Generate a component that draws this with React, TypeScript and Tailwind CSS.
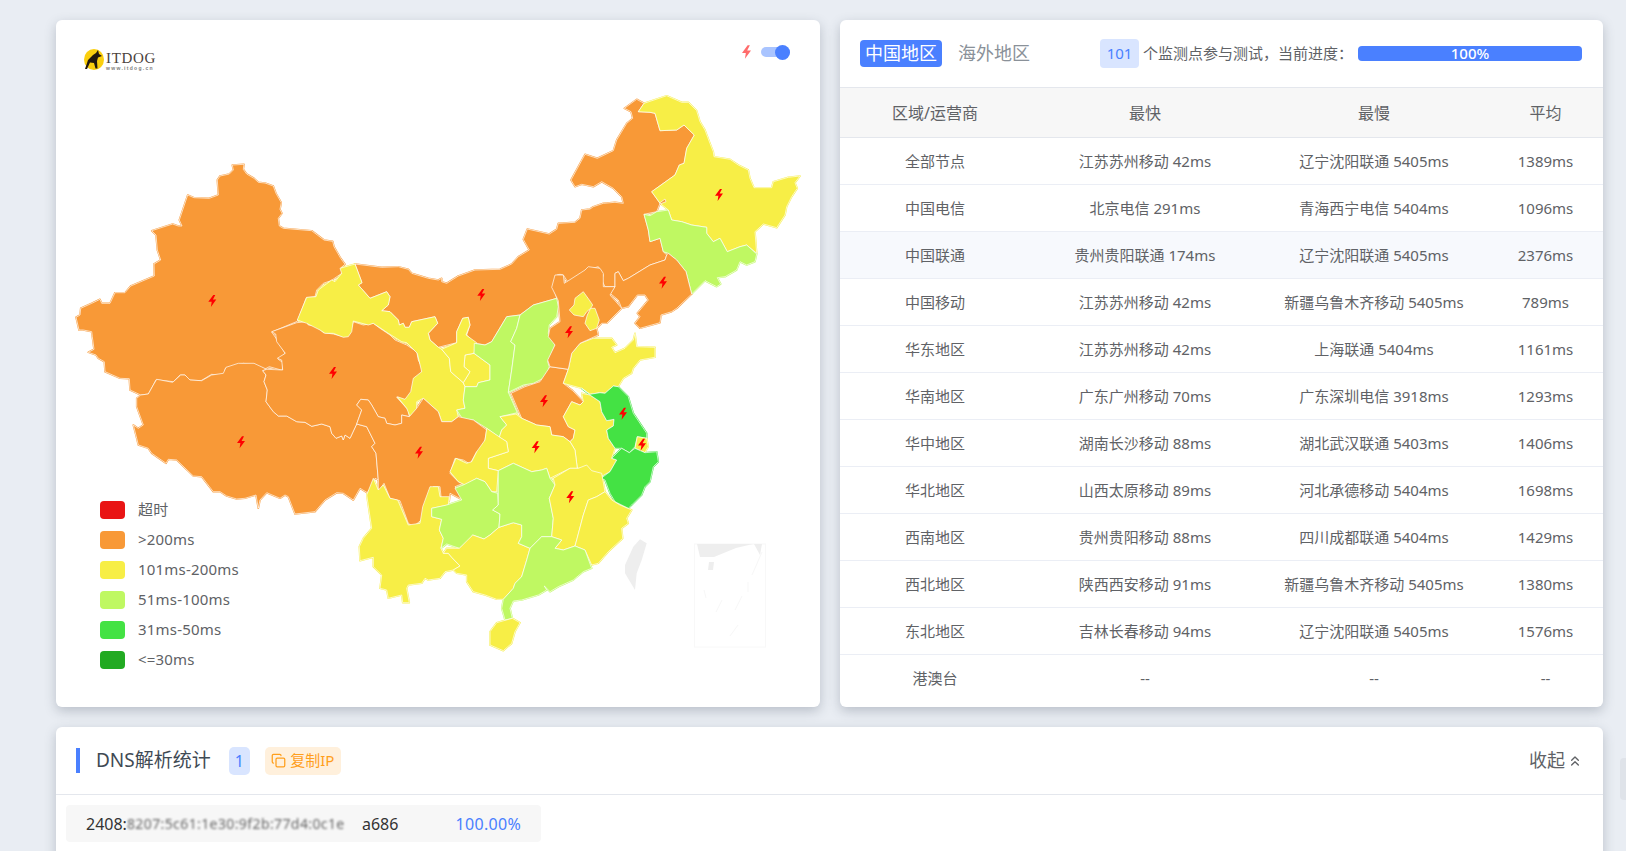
import { ChevronsUp, Copy } from "lucide-react";

// trace origins: each province outline is written in 3x crop coords of one of these page offsets
type Origin = [number, number];
const NW: Origin = [70, 150];
const TB: Origin = [130, 310];
const GS: Origin = [290, 190];
const NE: Origin = [560, 90];
const EA: Origin = [500, 260];
const SO: Origin = [350, 440];

const at = (o: Origin, s: string) =>
  s
    .trim()
    .split(/\s+/)
    .map((p) => {
      const [x, y] = p.split(",").map(Number);
      return `${(o[0] + x / 3).toFixed(1)},${(o[1] + y / 3).toFixed(1)}`;
    })
    .join(" ");

const ORANGE = "#f89937";
const YELLOW = "#f7ee46";
const LIME = "#bff862";
const GREEN = "#44e244";

const provinces: { fill: string; pts: string }[] = [
  // 新疆
  {
    fill: ORANGE,
    pts: [
      at(NW, "487,45 522,43 520,58 530,72 552,85 565,97 585,99 610,108 618,130 634,158 630,178 636,190 625,205 628,228 640,235 725,242 762,270 788,274 792,290 812,325 825,343 813,353 818,368 783,392 760,400 740,420 735,440 709,443 682,514 605,546 620,568 645,610 625,628 639,638 637,661 598,650 585,657 555,645 520,640 466,655 463,672 445,676 425,673 393,692 357,690 345,675 330,675 310,695 258,689"),
      at(TB, "70,225 55,252 32,255 0,240"),
      at(NW, "178,686 150,685 105,665 103,635 85,625 78,615 55,607 72,598 67,560 65,545 40,540 27,540 18,502 30,495 32,475 65,460 90,448 95,460 120,460 135,428 165,428 182,408 253,378 252,342 272,330 262,300 258,255 245,242 308,222 325,228 336,228 328,210 353,135 372,143 418,145 445,135 442,90 450,78 478,72 490,60"),
    ].join(" "),
  },
  // 西藏
  {
    fill: ORANGE,
    pts: at(TB, "80,208 128,217 152,195 165,195 180,210 215,212 245,195 280,190 288,172 325,160 372,160 410,178 398,182 408,195 402,215 412,240 408,275 430,305 445,318 470,318 500,335 525,337 545,349 575,342 600,350 605,370 618,385 635,378 640,390 645,375 660,385 680,342 710,350 735,400 725,410 738,430 745,510 735,505 728,525 712,548 690,535 670,570 640,550 620,548 585,570 555,605 495,612 475,560 465,555 450,565 410,548 390,570 385,595 378,555 345,565 320,567 290,558 270,545 250,545 215,500 190,498 140,450 115,448 108,460 65,430 55,415 25,405 20,385 10,345 25,355 40,345 20,290 20,265 32,255 55,252 70,225"),
  },
  // 青海
  {
    fill: ORANGE,
    pts: at(TB, "425,65 500,38 530,35 535,45 560,48 580,68 610,72 640,80 660,65 670,35 700,45 730,40 750,55 780,75 795,90 830,105 860,125 865,150 878,178 870,200 855,215 845,240 860,260 838,275 800,262 835,300 838,320 815,315 815,340 795,345 770,340 765,325 745,320 725,285 715,270 692,268 680,285 695,300 680,342 660,385 645,375 640,390 635,378 618,385 605,370 600,350 575,342 545,349 525,337 500,335 470,318 445,318 430,305 408,275 412,240 402,215 408,195 398,182 410,178 458,180 455,150 442,145 466,130 440,95 437,72"),
  },
  // 内蒙古
  {
    fill: ORANGE,
    pts: [
      at(GS, "195,222 275,232 325,230 355,238 365,250 415,265 445,270 455,265 455,275 470,280 505,258 555,240 630,238 665,222 685,200 718,180 700,148 712,117 778,132 800,118 805,100 855,97 870,85 875,60 900,57"),
      at(NE, "100,350 130,340 165,337 190,340 185,320 160,295 125,275 100,290 65,283 45,290 33,270 75,193 112,205 160,182 170,150 200,100 218,85 213,65 193,55 230,28 252,40 235,65 270,67 285,70 300,122 350,120 372,105 403,135 380,175 372,220 358,225 345,255 275,305 300,340 290,365 252,373 265,420 270,455 300,445 310,485 320,495 315,510 270,525 205,565 190,572 175,545 165,550 165,590 135,590 125,570 130,555 115,530 80,540 55,565 25,578 10,555 0,553"),
      at(GS, "800,255 790,290 800,325 730,345 690,375 650,380 605,455 585,465 555,460 530,435 540,405 535,382 518,385 500,425 500,458 445,472 420,450 415,430 443,400 435,380 365,395 358,412 345,412 340,400 328,405 325,390 300,365 275,362 295,345 300,320 290,305 240,325 205,285 216,278"),
    ].join(" "),
  },
  // 黑龙江
  {
    fill: YELLOW,
    pts: at(NE, "252,40 320,17 365,37 385,37 410,62 420,95 435,120 450,160 460,185 462,200 510,208 535,225 565,240 570,265 582,293 635,293 640,275 685,262 720,258 705,278 712,295 695,320 680,350 675,375 650,413 610,402 585,425 590,490 560,465 540,470 502,485 480,445 460,455 440,430 440,412 395,405 365,395 335,390 325,360 300,340 275,305 345,255 358,225 372,220 380,175 403,135 372,105 350,120 300,122 285,70 270,67 235,65"),
  },
  { fill: ORANGE, pts: at(NE, "300,338 315,327 318,335 300,342") },
  // 吉林
  {
    fill: LIME,
    pts: at(NE, "252,373 270,377 290,365 325,360 335,390 365,395 395,405 440,412 440,430 460,455 480,445 502,485 540,470 560,465 590,492 585,515 560,525 540,515 530,540 495,560 472,563 482,582 470,590 435,572 395,612 378,545 350,510 325,490 310,485 300,445 270,455 265,420"),
  },
  // 辽宁
  {
    fill: ORANGE,
    pts: at(NE, "165,590 165,550 175,545 190,572 205,565 270,525 315,510 320,495 325,490 350,510 378,545 395,612 350,655 335,665 303,675 300,698 240,715 225,700 240,680 232,670 265,630 255,615 232,615 205,650 185,655 175,630 150,610"),
  },
  // 甘肃
  {
    fill: YELLOW,
    pts: at(GS, "22,390 50,322 78,320 85,300 125,270 135,275 155,250 150,235 195,222 216,278 205,285 240,325 290,305 300,320 295,345 275,362 300,365 325,390 328,405 340,400 345,412 358,412 365,395 435,380 443,400 415,430 420,450 445,472 455,478 478,505 482,545 520,578 525,590 520,630 525,655 500,660 505,680 485,695 455,695 445,665 400,625 380,635 380,660 360,680 350,655 322,620 345,628 362,605 370,565 395,545 382,490 350,458 335,455 295,430 250,400 235,405 190,393 185,425 175,440 160,442 130,430 105,430 90,420 50,400"),
  },
  { fill: YELLOW, pts: at(GS, "552,490 600,525 600,570 565,578 560,590 525,590 520,578 540,545 522,530 525,495") },
  // 宁夏
  {
    fill: YELLOW,
    pts: at(GS, "455,478 500,458 500,425 518,385 535,382 540,405 528,435 560,458 552,490 525,495 522,530 540,545 520,578 482,545 478,505"),
  },
  // 陕西
  {
    fill: LIME,
    pts: at(GS, "690,375 680,415 662,455 675,465 665,540 655,607 682,668 630,680 650,705 635,720 628,742 590,715 550,690 520,690 500,660 525,655 520,630 525,590 560,590 565,578 600,570 600,525 552,490 553,460 585,465 605,455 650,380"),
  },
  // 山西
  {
    fill: LIME,
    pts: at(GS, "800,325 805,350 800,380 778,405 775,430 795,465 773,515 778,530 770,560 730,580 700,585 655,607 665,540 675,465 662,455 680,415 690,375 730,345"),
  },
  // 四川
  {
    fill: ORANGE,
    pts: at(TB, "680,342 695,300 680,285 692,268 715,270 725,285 745,320 765,325 770,340 795,345 815,340 815,315 838,320 860,295 880,265 925,305 935,335 965,335 985,320 1030,330 1070,360 1060,420 1040,425 1020,462 1000,450 975,445 960,490 985,515 1000,520 975,530 998,570 960,550 958,572 935,580 930,530 910,530 880,595 880,625 850,650 835,640 810,572 780,565 762,520 745,545 745,510 738,430 725,410 735,400 710,350"),
  },
  // 河南
  {
    fill: ORANGE,
    pts: at(EA, "150,320 205,328 190,370 218,392 250,425 240,435 215,425 190,470 205,500 225,510 220,535 210,545 190,530 155,525 150,500 110,495 65,475 48,435 33,400 75,380 120,365"),
  },
  // 山东
  {
    fill: YELLOW,
    pts: at(EA, "205,328 215,280 240,250 280,235 335,235 350,255 335,262 345,278 375,265 400,240 405,220 410,260 465,262 465,292 420,300 400,325 395,340 370,355 355,380 340,378 315,400 300,398 270,403 245,385 190,370"),
  },
  // 河北
  {
    fill: ORANGE,
    pts: at(EA, "175,122 155,82 165,45 190,45 193,70 255,30 265,20 300,25 310,40 310,80 345,80 330,105 365,145 345,165 320,190 305,190 290,205 295,225 240,250 215,280 205,328 150,320 143,300 165,255 145,230 150,205 180,185"),
  },
  { fill: YELLOW, pts: at(EA, "250,95 268,120 278,135 272,145 260,155 250,170 222,165 208,150 222,135 225,115") },
  { fill: YELLOW, pts: at(EA, "272,145 285,145 298,180 290,205 270,212 255,190 262,165") },
  // 安徽
  {
    fill: YELLOW,
    pts: at(EA, "245,400 270,405 300,425 305,455 320,482 342,478 340,498 320,510 325,535 345,565 335,595 350,600 330,635 303,650 250,625 232,625 225,570 210,545 220,535 225,510 205,500 190,470 215,425 240,435 250,425"),
  },
  // 江苏
  {
    fill: GREEN,
    pts: at(EA, "245,385 270,403 300,398 315,400 340,378 355,380 385,410 400,460 440,520 440,535 412,530 405,560 388,578 365,565 345,565 325,535 320,510 340,498 342,478 320,482 305,455 300,425 270,405"),
  },
  { fill: YELLOW, pts: at(EA, "412,530 440,535 445,560 435,578 405,565") },
  // 浙江
  {
    fill: GREEN,
    pts: at(EA, "365,565 388,578 405,565 435,578 470,575 475,605 460,620 450,665 435,680 425,705 395,735 385,745 345,725 330,700 315,660 303,655 330,635 350,600 335,595"),
  },
  // 湖北
  {
    fill: YELLOW,
    pts: [
      at(GS, "630,680 650,705 635,720 628,742"),
      at(SO, "470,5 475,35 415,55 415,85 445,92 490,70 545,95 575,90 590,85 600,115 660,85 685,85"),
      at(EA, "232,625 225,570 210,545 190,530 155,525 150,500 110,495 65,475 48,462"),
    ].join(" "),
  },
  // 重庆
  {
    fill: YELLOW,
    pts: at(SO, "410,-35 447,-10 470,5 475,35 415,55 415,85 445,92 440,155 425,155 405,125 380,115 345,135 325,125 300,95 318,55 350,70 365,65 380,35 405,0"),
  },
  // 云南
  {
    fill: YELLOW,
    pts: at(SO, "70,115 85,150 100,135 120,175 143,180 175,255 210,250 218,200 240,140 265,140 270,170 298,170 295,195 245,205 245,230 275,238 268,270 280,295 273,325 280,340 295,340 305,352 330,378 310,390 285,395 270,415 235,420 225,415 215,430 175,435 170,445 178,488 158,488 155,465 115,475 110,450 90,445 95,405 70,380 70,352 30,362 28,320 40,295 65,265 50,165"),
  },
  // 贵州
  {
    fill: LIME,
    pts: at(SO, "315,145 340,135 380,115 405,125 425,155 443,160 445,195 428,210 450,222 447,262 420,285 402,297 368,285 355,302 328,325 290,312 273,325 280,295 268,270 275,238 245,230 245,205 290,195 335,180"),
  },
  // 广西
  {
    fill: YELLOW,
    pts: at(SO, "280,340 290,325 328,325 368,285 402,297 420,285 447,262 490,248 515,255 515,290 505,310 540,325 530,360 515,410 495,430 490,445 460,478 440,478 405,465 370,455 350,425 350,405 320,400 310,390 330,378 305,352 295,340"),
  },
  // 湖南
  {
    fill: LIME,
    pts: at(SO, "445,92 490,70 545,95 575,90 590,85 600,115 615,135 598,175 610,235 605,290 575,290 540,325 505,310 515,290 515,255 490,248 447,262 450,222 428,210 445,195"),
  },
  // 江西
  {
    fill: YELLOW,
    pts: at(SO, "610,115 660,85 685,85 710,75 725,92 755,100 765,155 740,170 715,180 700,225 680,300 675,318 640,330 615,325 635,300 605,290 610,235 598,175 615,135"),
  },
  // 福建
  {
    fill: YELLOW,
    pts: at(SO, "765,155 785,180 810,195 845,210 830,235 835,250 815,265 818,295 775,335 745,370 725,375 705,330 675,318 680,300 700,225 715,180 740,170"),
  },
  // 广东
  {
    fill: LIME,
    pts: at(SO, "540,325 575,290 605,290 635,300 615,325 640,330 675,318 705,330 725,385 700,395 670,420 625,440 600,455 583,438 590,450 565,465 515,480 490,483 480,505 487,535 465,540 455,505 460,478 490,445 495,430 515,410 530,360"),
  },
  // 海南
  { fill: YELLOW, pts: at(SO, "487,535 510,548 495,575 485,610 460,632 420,615 420,575 440,548") },
];

// no data: Taiwan, HK and the South China Sea inset
const grayAreas = [
  at(SO, "870,298 890,310 875,360 860,400 855,450 825,400 825,375 850,320"),
  at(SO, "605,432 628,428 630,440 610,448"),
  "697,544 753,544 736,548 714,557 700,557",
  "754,544 762,544 760,555",
  "709,562 714,562 713,570 708,570",
];

const bolts: [number, number][] = [
  [212.3, 301],
  [333, 373],
  [241, 442.3],
  [419, 452.7],
  [481.3, 295],
  [569, 332.3],
  [663, 282.7],
  [719, 195],
  [544, 401.3],
  [535.7, 447.3],
  [570.3, 497.3],
  [623, 413.7],
  [642, 444.7],
];

const legend = [
  { color: "#e91515", label: "超时" },
  { color: ORANGE, label: ">200ms" },
  { color: YELLOW, label: "101ms-200ms" },
  { color: LIME, label: "51ms-100ms" },
  { color: GREEN, label: "31ms-50ms" },
  { color: "#22aa22", label: "<=30ms" },
];

const rows = [
  ["全部节点", "江苏苏州移动 42ms", "辽宁沈阳联通 5405ms", "1389ms"],
  ["中国电信", "北京电信 291ms", "青海西宁电信 5404ms", "1096ms"],
  ["中国联通", "贵州贵阳联通 174ms", "辽宁沈阳联通 5405ms", "2376ms"],
  ["中国移动", "江苏苏州移动 42ms", "新疆乌鲁木齐移动 5405ms", "789ms"],
  ["华东地区", "江苏苏州移动 42ms", "上海联通 5404ms", "1161ms"],
  ["华南地区", "广东广州移动 70ms", "广东深圳电信 3918ms", "1293ms"],
  ["华中地区", "湖南长沙移动 88ms", "湖北武汉联通 5403ms", "1406ms"],
  ["华北地区", "山西太原移动 89ms", "河北承德移动 5404ms", "1698ms"],
  ["西南地区", "贵州贵阳移动 88ms", "四川成都联通 5404ms", "1429ms"],
  ["西北地区", "陕西西安移动 91ms", "新疆乌鲁木齐移动 5405ms", "1380ms"],
  ["东北地区", "吉林长春移动 94ms", "辽宁沈阳联通 5405ms", "1576ms"],
  ["港澳台", "--", "--", "--"],
];

const BOLT = "1,-6 -4,0.8 -0.6,0.8 -1.4,6 4,-1.4 0.6,-1.4 3,-6";

function ChinaMap() {
  return (
    <svg viewBox="56 20 764 687" className="block h-[687px] w-[764px]">
      <rect x="694.5" y="544" width="71" height="103" fill="none" stroke="#f8f8f8" />
      <path d="M762 552 L752 575 M748 582 L748 592 M742 596 L735 610 M722 600 L716 612 M704 590 L706 598 M738 625 L730 636" stroke="#f7f7f7" fill="none" />
      {grayAreas.map((pts) => (
        <polygon key={pts} points={pts} fill="#eeeeee" />
      ))}
      {/* fattened underlay closes the slivers between hand traced neighbours */}
      {provinces.map((p) => (
        <polygon key={p.pts} points={p.pts} fill={p.fill} stroke={p.fill} strokeWidth="1.6" strokeLinejoin="round" />
      ))}
      {provinces.map((p) => (
        <polygon key={p.pts} points={p.pts} fill={p.fill} stroke="#ffffff" strokeOpacity="0.85" strokeWidth="0.8" strokeLinejoin="round" />
      ))}
      {bolts.map(([x, y]) => (
        <polygon key={`${x}-${y}`} points={BOLT} transform={`translate(${x} ${y})`} fill="#ff0000" />
      ))}
    </svg>
  );
}

function Logo() {
  return (
    <div className="absolute left-[28px] top-[28px] flex items-center gap-[2px]">
      <svg viewBox="0 0 20 21" className="h-[21px] w-5">
        <ellipse cx="10" cy="10.5" rx="10" ry="10.5" fill="#fbcf0e" />
        <polygon points="14,1 15,5 18,7 14,8.5 13,12 13.5,19.5 11.5,19.5 10,14 6,13.5 3,20 1,20 4,11 9,6 12,4" fill="#22180e" />
      </svg>
      <div className="flex flex-col pt-1">
        <span className="font-['Liberation_Serif',serif] text-[15px] leading-[13px] tracking-[0.7px] text-[#4a413c]">ITDOG</span>
        <span className="font-['Liberation_Sans',sans-serif] text-[5px] font-bold leading-[6px] tracking-[1.3px] text-[#7d7d7d]">www.itdog.cn</span>
      </div>
    </div>
  );
}

function MapCard() {
  return (
    <div className="relative h-[687px] w-[764px] shrink-0 rounded-md bg-white shadow-[0_4px_12px_rgba(50,60,80,0.26)]">
      <ChinaMap />
      <Logo />
      <div className="absolute right-[30px] top-[24px] flex items-center gap-[10px]">
        <svg viewBox="-4 -6 8 12" className="h-4 w-[9px]">
          <polygon points={BOLT} fill="#ff6b6b" />
        </svg>
        <div className="relative h-[10px] w-[29px] rounded-full bg-[#a9c4ff]">
          <div className="absolute -top-[2.5px] right-0 size-[15px] rounded-full bg-[#4a80ff]" />
        </div>
      </div>
      <div className="absolute left-[44px] top-[481px] flex flex-col gap-3">
        {legend.map((l) => (
          <div key={l.label} className="flex h-[18px] items-center gap-[13px]">
            <span className="h-[18px] w-[25px] rounded" style={{ backgroundColor: l.color }} />
            <span className="-translate-y-px text-[15px] leading-[18px] tracking-[0.2px] text-[#606266]">{l.label}</span>
          </div>
        ))}
      </div>
    </div>
  );
}

function StatsCard() {
  return (
    <div className="h-[687px] w-[763px] shrink-0 overflow-hidden rounded-md bg-white shadow-[0_4px_12px_rgba(50,60,80,0.26)]">
      <div className="flex h-[68px] items-center border-b border-[#e4e7ed] pl-5 pr-[21px]">
        <span className="flex h-[27px] w-[82px] items-center justify-center rounded bg-[#4a80ff] text-[18px] text-white">中国地区</span>
        <span className="ml-4 text-[18px] text-[#8a9199]">海外地区</span>
        <span className="ml-[70px] flex h-[29px] w-[39px] items-center justify-center rounded bg-[#d9e5ff] text-[15px] text-[#4a80ff]">101</span>
        <span className="ml-1 text-[15px] text-[#606266]">个监测点参与测试，当前进度：</span>
        <div className="ml-auto flex h-[15px] w-[224px] items-center justify-center rounded bg-[#4a80ff] text-[15px] font-medium text-white">100%</div>
      </div>
      <div className="grid h-[50px] grid-cols-[190px_230px_228px_1fr] items-center border-b border-[#e4e7ed] bg-[#f7f7f7] text-center text-[16px] text-[#606266]">
        <span>区域/运营商</span>
        <span>最快</span>
        <span>最慢</span>
        <span>平均</span>
      </div>
      {rows.map((r, i) => (
        <div
          key={r[0]}
          className={`grid h-[47px] grid-cols-[190px_230px_228px_1fr] items-center border-b border-[#ebeef5] text-center text-[15px] text-[#606266] last:border-b-0 ${
            i === 2 ? "bg-[#f7f9fd]" : ""
          }`}
        >
          {r.map((c, j) => (
            <span key={j}>{c}</span>
          ))}
        </div>
      ))}
    </div>
  );
}

function DnsCard() {
  return (
    <div className="h-[200px] w-[1547px] shrink-0 rounded-md bg-white shadow-[0_4px_12px_rgba(50,60,80,0.26)]">
      <div className="flex h-[68px] items-center border-b border-[#e4e7ed] pl-5 pr-5">
        <span className="h-[25px] w-1 bg-[#4a80ff]" />
        <span className="ml-4 text-[19px] text-[#3f4a54]">DNS解析统计</span>
        <span className="ml-[18px] flex h-7 w-[21px] items-center justify-center rounded-[5px] bg-[#d9e5ff] text-[16px] text-[#4a80ff]">1</span>
        <span className="ml-[15px] flex h-7 w-[76px] items-center justify-center gap-1 rounded-[5px] bg-[#fff0dc] text-[15px] text-[#ff9f1c]">
          <Copy size={15} />
          复制IP
        </span>
        <span className="ml-auto text-[18px] text-[#606266]">收起</span>
        <ChevronsUp size={16} className="ml-[2px] text-[#606266]" />
      </div>
      <div className="ml-[10px] mt-[10px] flex h-[37px] w-[475px] items-center rounded bg-[#f7f7f7] pl-5 text-[16px] text-[#333333]">
        <span>2408:</span>
        <span className="w-[235px] whitespace-nowrap text-[14px] tracking-[0.4px] text-[#666666] blur-[1px]">8207:5c61:1e30:9f2b:77d4:0c1e</span>
        <span>a686</span>
        <span className="ml-auto mr-[20px] tracking-[0.3px] text-[#4a80ff]">100.00%</span>
      </div>
    </div>
  );
}

export default function App() {
  return (
    <div className="relative h-[851px] w-full overflow-hidden bg-[#e9edf3] pl-14 font-['Noto_Sans','Noto_Sans_CJK_SC',sans-serif]">
      <div className="h-0 w-[1547px] shadow-[0_2px_8px_rgba(60,70,90,0.3)]" />
      <div className="flex gap-5 pt-5">
        <MapCard />
        <StatsCard />
      </div>
      <div className="mt-5">
        <DnsCard />
      </div>
      {/* page scrollbar thumb */}
      <div className="absolute right-0 top-[758px] h-[42px] w-[6px] rounded-l-sm bg-[#dfe3e9]" />
    </div>
  );
}
